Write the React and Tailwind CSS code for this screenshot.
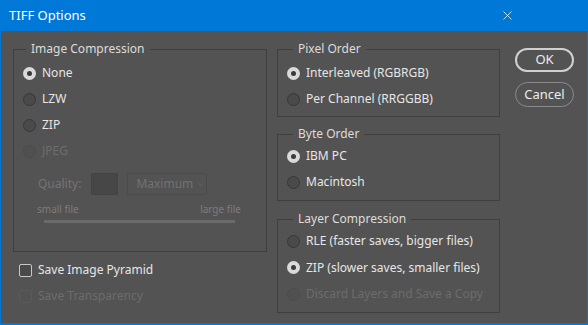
import { X, ChevronDown } from 'lucide-react'

const font = { fontFamily: '"Noto Sans", "Open Sans", sans-serif' }

const Radio = ({ label, checked, disabled, tall }) => (
  <div className={`flex items-center pl-[9px] ${tall ? 'h-[26.5px]' : 'h-[26px]'}`}>
    {checked ? (
      <span className="flex h-[13px] w-[13px] items-center justify-center rounded-full bg-[#dadada]">
        <span className="h-[5px] w-[5px] rounded-full bg-[#3a3a3a]" />
      </span>
    ) : (
      <span
        className={
          disabled
            ? 'h-[13px] w-[13px] rounded-full border border-[#4c4c4c] bg-[#505050]'
            : 'h-[13px] w-[13px] rounded-full border border-[#383838] bg-[#4a4a4a]'
        }
      />
    )}
    <span className={`ml-[6px] text-[12px] ${disabled ? 'text-[#6c6c6c]' : 'text-[#e6e6e6]'}`}>{label}</span>
  </div>
)

const Group = ({ title, offset, className, children }) => (
  <fieldset className={`border border-[#3f3f3f] px-0 ${className}`}>
    <legend className={`${offset} px-[5px] text-[12px] leading-[14px] text-[#dcdcdc]`}>{title}</legend>
    {children}
  </fieldset>
)

const Check = ({ label, disabled }) => (
  <div className="flex h-[26px] items-center pl-[6px]">
    <span
      className={
        disabled
          ? 'h-[13px] w-[13px] rounded-[2px] border border-[#5a5a5a]'
          : 'h-[13px] w-[13px] rounded-[2px] border border-[#c8c8c8] bg-[#4a4a4a]'
      }
    />
    <span className={`ml-[6px] text-[12px] ${disabled ? 'text-[#6c6c6c]' : 'text-[#e6e6e6]'}`}>{label}</span>
  </div>
)

export default function App() {
  return (
    <div className="flex h-[325px] w-[588px] flex-col bg-[#0078d7]" style={font}>
      <div className="flex h-[31px] items-center justify-between pl-[9px] pr-[73px] text-white">
        <span className="text-[13px]">TIFF Options</span>
        <X size={15} strokeWidth={1.2} />
      </div>
      <div className="mx-[1px] mb-[2px] flex flex-1 bg-[#535353] pl-[12px] pt-[11px]">
        <div className="w-[254px]">
          <Group title="Image Compression" offset="ml-[12px]" className="h-[210px]">
            <div className="pt-[4px]">
              <Radio label="None" checked />
              <Radio label="LZW" />
              <Radio label="ZIP" />
              <Radio label="JPEG" disabled />
            </div>
            <div className="mt-[9px] flex h-[22px] items-center pl-[24px]">
              <span className="text-[12px] text-[#747474]">Quality:</span>
              <span className="ml-[10px] h-[22px] w-[27px] border border-[#444444] bg-[#474747]" />
              <span className="ml-[9px] flex h-[22px] w-[80px] items-center gap-[3px] border border-[#4b4b4b] pl-[8px] text-[12px] text-[#727272]">
                Maximum
                <ChevronDown size={9} strokeWidth={1.5} className="flex-none text-[#6c6c6c]" />
              </span>
            </div>
            <div className="mt-[7px] flex justify-between pl-[23px] pr-[25px] text-[10px] leading-[14px] text-[#7c7c7c]">
              <span>small file</span>
              <span>large file</span>
            </div>
            <div className="ml-[30px] mt-[4px] h-[3px] w-[191px] bg-[#6a6a6a]" />
          </Group>
          <div className="mt-[5px]">
            <Check label="Save Image Pyramid" />
            <Check label="Save Transparency" disabled />
          </div>
        </div>
        <div className="ml-[10px] w-[223px]">
          <Group title="Pixel Order" offset="ml-[15px]" className="h-[75px]">
            <div className="pt-[4px]">
              <Radio label="Interleaved (RGBRGB)" checked />
              <Radio label="Per Channel (RRGGBB)" />
            </div>
          </Group>
          <Group title="Byte Order" offset="ml-[15px]" className="mt-[10px] h-[74px]">
            <div className="pt-[2px]">
              <Radio label="IBM PC" checked />
              <Radio label="Macintosh" />
            </div>
          </Group>
          <Group title="Layer Compression" offset="ml-[15px]" className="mt-[11px] h-[101px]">
            <div className="pt-[2px]">
              <Radio label="RLE (faster saves, bigger files)" tall />
              <Radio label="ZIP (slower saves, smaller files)" checked tall />
              <Radio label="Discard Layers and Save a Copy" disabled tall />
            </div>
          </Group>
        </div>
        <div className="ml-[15px] flex flex-col pt-[6px]">
          <button className="h-[24px] w-[59px] rounded-full border-2 border-[#d0d0d0] text-[13px] text-[#ececec]">OK</button>
          <button className="mt-[10px] h-[25px] w-[59px] rounded-full border border-[#8a8a8a] text-[13px] text-[#ececec]">Cancel</button>
        </div>
      </div>
    </div>
  )
}
